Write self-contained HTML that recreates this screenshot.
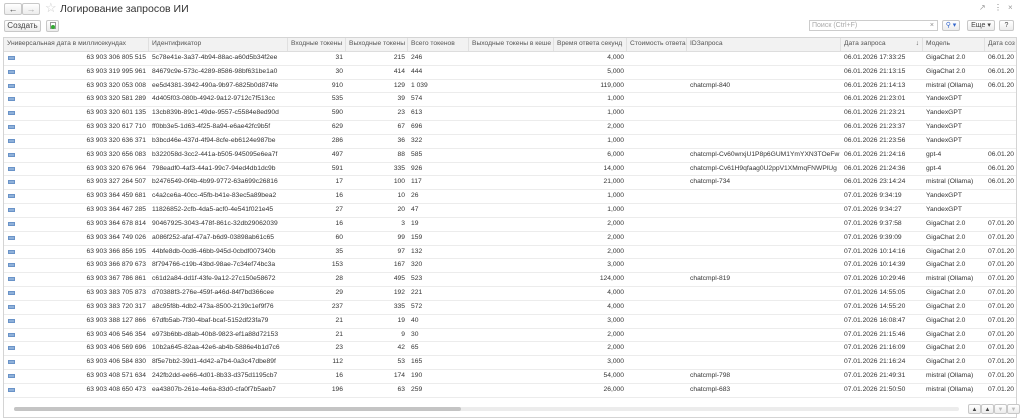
<!DOCTYPE html>
<html><head><meta charset="utf-8"><style>
*{box-sizing:border-box;margin:0;padding:0}
body{width:1024px;height:420px;background:#fff;font-family:"Liberation Sans",Arial,sans-serif;color:#333;position:relative;overflow:hidden}
.a{position:absolute}
.btn{position:absolute;border:1px solid #c8c8c8;border-radius:2px;background:linear-gradient(#fff,#ececec);font-size:8px;color:#444;text-align:center;line-height:10px}
.grid{position:absolute;left:3px;top:37px;width:1014px;height:381px;border:1px solid #d4d4d4;overflow:hidden}
.r{display:flex;height:13.84px;border-bottom:1px solid #ececec;font-size:6.7px;line-height:12.8px;white-space:nowrap}
.h{background:#f2f2f2;height:14px;border-bottom:1px solid #ddd;color:#555}
.r>div{overflow:hidden;padding:0 3px;flex-shrink:0}
.h>div{border-right:1px solid #e0e0e0}
.c0{width:145px;text-align:right;position:relative}
.c1{width:139px}.c2{width:58px;text-align:right}.c3{width:62px;text-align:right}.c4{width:61px}.c5{width:85px}.c6{width:73px;text-align:right}.c7{width:60px}.c8{width:154px}.c9{width:82px}.c10{width:62px}.c11{width:40px}
.h .c0,.h .c2,.h .c3,.h .c6{text-align:left}
.ic{position:absolute;left:4px;top:4px;width:7px;height:4px;background:#8fb1da;border:1px solid #6a93c8}
</style></head><body>
<div class="btn" style="left:4px;top:3px;width:18px;height:12px;font-size:9px">&#8592;</div>
<div class="btn" style="left:22px;top:3px;width:18px;height:12px;font-size:9px;color:#aaa">&#8594;</div>
<div class="a" style="left:45px;top:0px;font-size:13px;color:#ccc">&#9734;</div>
<div class="a" style="left:60px;top:3px;font-size:10.5px;color:#333">Логирование запросов ИИ</div>
<div class="a" style="left:979px;top:3px;font-size:8px;color:#999">&#8599;</div>
<div class="a" style="left:994px;top:3px;font-size:8px;color:#777">&#8942;</div>
<div class="a" style="left:1008px;top:3px;font-size:8px;color:#999">×</div>
<div class="btn" style="left:4px;top:20px;width:37px;height:12px">Создать</div>
<div class="btn" style="left:46px;top:20px;width:13px;height:12px"><span style="display:inline-block;width:6px;height:7px;border:1px solid #999;background:#fff;margin-top:1px;position:relative"><span style="position:absolute;left:0;top:2px;width:4px;height:4px;border-radius:50%;background:#3a3"></span></span></div>
<div class="a" style="left:809px;top:20px;width:129px;height:11px;border:1px solid #ccc;font-size:7px;color:#aaa;padding-left:2px;line-height:9px">Поиск (Ctrl+F)<span style="position:absolute;right:3px;color:#888">×</span></div>
<div class="btn" style="left:942px;top:20px;width:18px;height:11px;color:#36c;font-size:7px">&#9906; ▾</div>
<div class="btn" style="left:967px;top:20px;width:28px;height:11px;font-size:7px">Еще ▾</div>
<div class="btn" style="left:999px;top:20px;width:15px;height:11px;font-size:7px">?</div>
<div class="grid">
<div class="r h"><div class="c0">Универсальная дата в миллисекундах</div><div class="c1">Идентификатор</div><div class="c2">Входные токены</div><div class="c3">Выходные токены</div><div class="c4">Всего токенов</div><div class="c5">Выходные токены в кеше</div><div class="c6">Время ответа секунд</div><div class="c7">Стоимость ответа</div><div class="c8">IDЗапроса</div><div class="c9">Дата запроса <span style="float:right">↓</span></div><div class="c10">Модель</div><div class="c11">Дата соз</div></div>
<div class="r"><div class="c0"><i class="ic"></i>63 903 306 805 515</div><div class="c1">5c78e41e-3a37-4b94-88ac-a60d5b34f2ee</div><div class="c2">31</div><div class="c3">215</div><div class="c4">246</div><div class="c5"></div><div class="c6">4,000</div><div class="c7"></div><div class="c8"></div><div class="c9">06.01.2026 17:33:25</div><div class="c10">GigaChat 2.0</div><div class="c11">06.01.20</div></div>
<div class="r"><div class="c0"><i class="ic"></i>63 903 319 995 961</div><div class="c1">84679c9e-573c-4289-8586-98bf631be1a0</div><div class="c2">30</div><div class="c3">414</div><div class="c4">444</div><div class="c5"></div><div class="c6">5,000</div><div class="c7"></div><div class="c8"></div><div class="c9">06.01.2026 21:13:15</div><div class="c10">GigaChat 2.0</div><div class="c11">06.01.20</div></div>
<div class="r"><div class="c0"><i class="ic"></i>63 903 320 053 008</div><div class="c1">ee5d4381-3942-490a-9b97-6825b0d874fe</div><div class="c2">910</div><div class="c3">129</div><div class="c4">1 039</div><div class="c5"></div><div class="c6">119,000</div><div class="c7"></div><div class="c8">chatcmpl-840</div><div class="c9">06.01.2026 21:14:13</div><div class="c10">mistral (Ollama)</div><div class="c11">06.01.20</div></div>
<div class="r"><div class="c0"><i class="ic"></i>63 903 320 581 289</div><div class="c1">4d405f03-080b-4942-9a12-9712c7f513cc</div><div class="c2">535</div><div class="c3">39</div><div class="c4">574</div><div class="c5"></div><div class="c6">1,000</div><div class="c7"></div><div class="c8"></div><div class="c9">06.01.2026 21:23:01</div><div class="c10">YandexGPT</div><div class="c11"></div></div>
<div class="r"><div class="c0"><i class="ic"></i>63 903 320 601 135</div><div class="c1">13cb839b-89c1-49de-9557-c5584e8ed90d</div><div class="c2">590</div><div class="c3">23</div><div class="c4">613</div><div class="c5"></div><div class="c6">1,000</div><div class="c7"></div><div class="c8"></div><div class="c9">06.01.2026 21:23:21</div><div class="c10">YandexGPT</div><div class="c11"></div></div>
<div class="r"><div class="c0"><i class="ic"></i>63 903 320 617 710</div><div class="c1">ff0bb3e5-1d63-4f25-8a94-e6ae42fc9b5f</div><div class="c2">629</div><div class="c3">67</div><div class="c4">696</div><div class="c5"></div><div class="c6">2,000</div><div class="c7"></div><div class="c8"></div><div class="c9">06.01.2026 21:23:37</div><div class="c10">YandexGPT</div><div class="c11"></div></div>
<div class="r"><div class="c0"><i class="ic"></i>63 903 320 636 371</div><div class="c1">b3bcd46e-437d-4f94-8cfe-eb6124e987be</div><div class="c2">286</div><div class="c3">36</div><div class="c4">322</div><div class="c5"></div><div class="c6">1,000</div><div class="c7"></div><div class="c8"></div><div class="c9">06.01.2026 21:23:56</div><div class="c10">YandexGPT</div><div class="c11"></div></div>
<div class="r"><div class="c0"><i class="ic"></i>63 903 320 656 083</div><div class="c1">b322058d-3cc2-441a-b505-945095e6ea7f</div><div class="c2">497</div><div class="c3">88</div><div class="c4">585</div><div class="c5"></div><div class="c6">6,000</div><div class="c7"></div><div class="c8">chatcmpl-Cv60wrxjU1P8p6GUM1YmYXN3TOeFw</div><div class="c9">06.01.2026 21:24:16</div><div class="c10">gpt-4</div><div class="c11">06.01.20</div></div>
<div class="r"><div class="c0"><i class="ic"></i>63 903 320 676 964</div><div class="c1">798eadf0-4af3-44a1-99c7-94ed4db1dc9b</div><div class="c2">591</div><div class="c3">335</div><div class="c4">926</div><div class="c5"></div><div class="c6">14,000</div><div class="c7"></div><div class="c8">chatcmpl-Cv61H9qfaag0U2ppV1XMmqFNWPlUg</div><div class="c9">06.01.2026 21:24:36</div><div class="c10">gpt-4</div><div class="c11">06.01.20</div></div>
<div class="r"><div class="c0"><i class="ic"></i>63 903 327 264 507</div><div class="c1">b2476549-0f4b-4b99-9772-63a699c26816</div><div class="c2">17</div><div class="c3">100</div><div class="c4">117</div><div class="c5"></div><div class="c6">21,000</div><div class="c7"></div><div class="c8">chatcmpl-734</div><div class="c9">06.01.2026 23:14:24</div><div class="c10">mistral (Ollama)</div><div class="c11">06.01.20</div></div>
<div class="r"><div class="c0"><i class="ic"></i>63 903 364 459 681</div><div class="c1">c4a2ce6a-40cc-45fb-b41e-83ec5a89bea2</div><div class="c2">16</div><div class="c3">10</div><div class="c4">26</div><div class="c5"></div><div class="c6">1,000</div><div class="c7"></div><div class="c8"></div><div class="c9">07.01.2026 9:34:19</div><div class="c10">YandexGPT</div><div class="c11"></div></div>
<div class="r"><div class="c0"><i class="ic"></i>63 903 364 467 285</div><div class="c1">11826852-2cfb-4da5-acf0-4e541f021e45</div><div class="c2">27</div><div class="c3">20</div><div class="c4">47</div><div class="c5"></div><div class="c6">1,000</div><div class="c7"></div><div class="c8"></div><div class="c9">07.01.2026 9:34:27</div><div class="c10">YandexGPT</div><div class="c11"></div></div>
<div class="r"><div class="c0"><i class="ic"></i>63 903 364 678 814</div><div class="c1">90467925-3043-478f-861c-32db29062039</div><div class="c2">16</div><div class="c3">3</div><div class="c4">19</div><div class="c5"></div><div class="c6">2,000</div><div class="c7"></div><div class="c8"></div><div class="c9">07.01.2026 9:37:58</div><div class="c10">GigaChat 2.0</div><div class="c11">07.01.20</div></div>
<div class="r"><div class="c0"><i class="ic"></i>63 903 364 749 026</div><div class="c1">a086f252-afaf-47a7-b6d9-03898ab61c65</div><div class="c2">60</div><div class="c3">99</div><div class="c4">159</div><div class="c5"></div><div class="c6">2,000</div><div class="c7"></div><div class="c8"></div><div class="c9">07.01.2026 9:39:09</div><div class="c10">GigaChat 2.0</div><div class="c11">07.01.20</div></div>
<div class="r"><div class="c0"><i class="ic"></i>63 903 366 856 195</div><div class="c1">44bfe8db-0cd6-46bb-945d-0cbdf007340b</div><div class="c2">35</div><div class="c3">97</div><div class="c4">132</div><div class="c5"></div><div class="c6">2,000</div><div class="c7"></div><div class="c8"></div><div class="c9">07.01.2026 10:14:16</div><div class="c10">GigaChat 2.0</div><div class="c11">07.01.20</div></div>
<div class="r"><div class="c0"><i class="ic"></i>63 903 366 879 673</div><div class="c1">8f794766-c19b-43bd-98ae-7c34ef74bc3a</div><div class="c2">153</div><div class="c3">167</div><div class="c4">320</div><div class="c5"></div><div class="c6">3,000</div><div class="c7"></div><div class="c8"></div><div class="c9">07.01.2026 10:14:39</div><div class="c10">GigaChat 2.0</div><div class="c11">07.01.20</div></div>
<div class="r"><div class="c0"><i class="ic"></i>63 903 367 786 861</div><div class="c1">c61d2a84-dd1f-43fe-9a12-27c150e58672</div><div class="c2">28</div><div class="c3">495</div><div class="c4">523</div><div class="c5"></div><div class="c6">124,000</div><div class="c7"></div><div class="c8">chatcmpl-819</div><div class="c9">07.01.2026 10:29:46</div><div class="c10">mistral (Ollama)</div><div class="c11">07.01.20</div></div>
<div class="r"><div class="c0"><i class="ic"></i>63 903 383 705 873</div><div class="c1">d70388f3-276e-459f-a46d-84f7bd366cee</div><div class="c2">29</div><div class="c3">192</div><div class="c4">221</div><div class="c5"></div><div class="c6">4,000</div><div class="c7"></div><div class="c8"></div><div class="c9">07.01.2026 14:55:05</div><div class="c10">GigaChat 2.0</div><div class="c11">07.01.20</div></div>
<div class="r"><div class="c0"><i class="ic"></i>63 903 383 720 317</div><div class="c1">a8c95f8b-4db2-473a-8500-2139c1ef9f76</div><div class="c2">237</div><div class="c3">335</div><div class="c4">572</div><div class="c5"></div><div class="c6">4,000</div><div class="c7"></div><div class="c8"></div><div class="c9">07.01.2026 14:55:20</div><div class="c10">GigaChat 2.0</div><div class="c11">07.01.20</div></div>
<div class="r"><div class="c0"><i class="ic"></i>63 903 388 127 866</div><div class="c1">67dfb5ab-7f30-4baf-bcaf-5152df23fa79</div><div class="c2">21</div><div class="c3">19</div><div class="c4">40</div><div class="c5"></div><div class="c6">3,000</div><div class="c7"></div><div class="c8"></div><div class="c9">07.01.2026 16:08:47</div><div class="c10">GigaChat 2.0</div><div class="c11">07.01.20</div></div>
<div class="r"><div class="c0"><i class="ic"></i>63 903 406 546 354</div><div class="c1">e973b6bb-d8ab-40b8-9823-ef1a88d72153</div><div class="c2">21</div><div class="c3">9</div><div class="c4">30</div><div class="c5"></div><div class="c6">2,000</div><div class="c7"></div><div class="c8"></div><div class="c9">07.01.2026 21:15:46</div><div class="c10">GigaChat 2.0</div><div class="c11">07.01.20</div></div>
<div class="r"><div class="c0"><i class="ic"></i>63 903 406 569 696</div><div class="c1">10b2a645-82aa-42e6-ab4b-5886e4b1d7c6</div><div class="c2">23</div><div class="c3">42</div><div class="c4">65</div><div class="c5"></div><div class="c6">2,000</div><div class="c7"></div><div class="c8"></div><div class="c9">07.01.2026 21:16:09</div><div class="c10">GigaChat 2.0</div><div class="c11">07.01.20</div></div>
<div class="r"><div class="c0"><i class="ic"></i>63 903 406 584 830</div><div class="c1">8f5e7bb2-39d1-4d42-a7b4-0a3c47dbe89f</div><div class="c2">112</div><div class="c3">53</div><div class="c4">165</div><div class="c5"></div><div class="c6">3,000</div><div class="c7"></div><div class="c8"></div><div class="c9">07.01.2026 21:16:24</div><div class="c10">GigaChat 2.0</div><div class="c11">07.01.20</div></div>
<div class="r"><div class="c0"><i class="ic"></i>63 903 408 571 634</div><div class="c1">242fb2dd-ee66-4d01-8b33-d375d1195cb7</div><div class="c2">16</div><div class="c3">174</div><div class="c4">190</div><div class="c5"></div><div class="c6">54,000</div><div class="c7"></div><div class="c8">chatcmpl-798</div><div class="c9">07.01.2026 21:49:31</div><div class="c10">mistral (Ollama)</div><div class="c11">07.01.20</div></div>
<div class="r"><div class="c0"><i class="ic"></i>63 903 408 650 473</div><div class="c1">ea43807b-261e-4e6a-83d0-cfa0f7b5aeb7</div><div class="c2">196</div><div class="c3">63</div><div class="c4">259</div><div class="c5"></div><div class="c6">26,000</div><div class="c7"></div><div class="c8">chatcmpl-683</div><div class="c9">07.01.2026 21:50:50</div><div class="c10">mistral (Ollama)</div><div class="c11">07.01.20</div></div>
</div>
<div class="a" style="left:14px;top:407px;width:447px;height:4px;border-radius:2px;background:#c4c4c4"></div>
<div class="a" style="left:14px;top:407px;width:945px;height:4px;border-radius:2px;background:#ececec;z-index:-1"></div>
<div class="btn" style="left:968px;top:404px;width:13px;height:10px;font-size:6px">▲</div>
<div class="btn" style="left:981px;top:404px;width:13px;height:10px;font-size:6px">▲</div>
<div class="btn" style="left:994px;top:404px;width:13px;height:10px;font-size:6px;color:#bbb">▼</div>
<div class="btn" style="left:1007px;top:404px;width:13px;height:10px;font-size:6px;color:#bbb">▼</div>
</body></html>
